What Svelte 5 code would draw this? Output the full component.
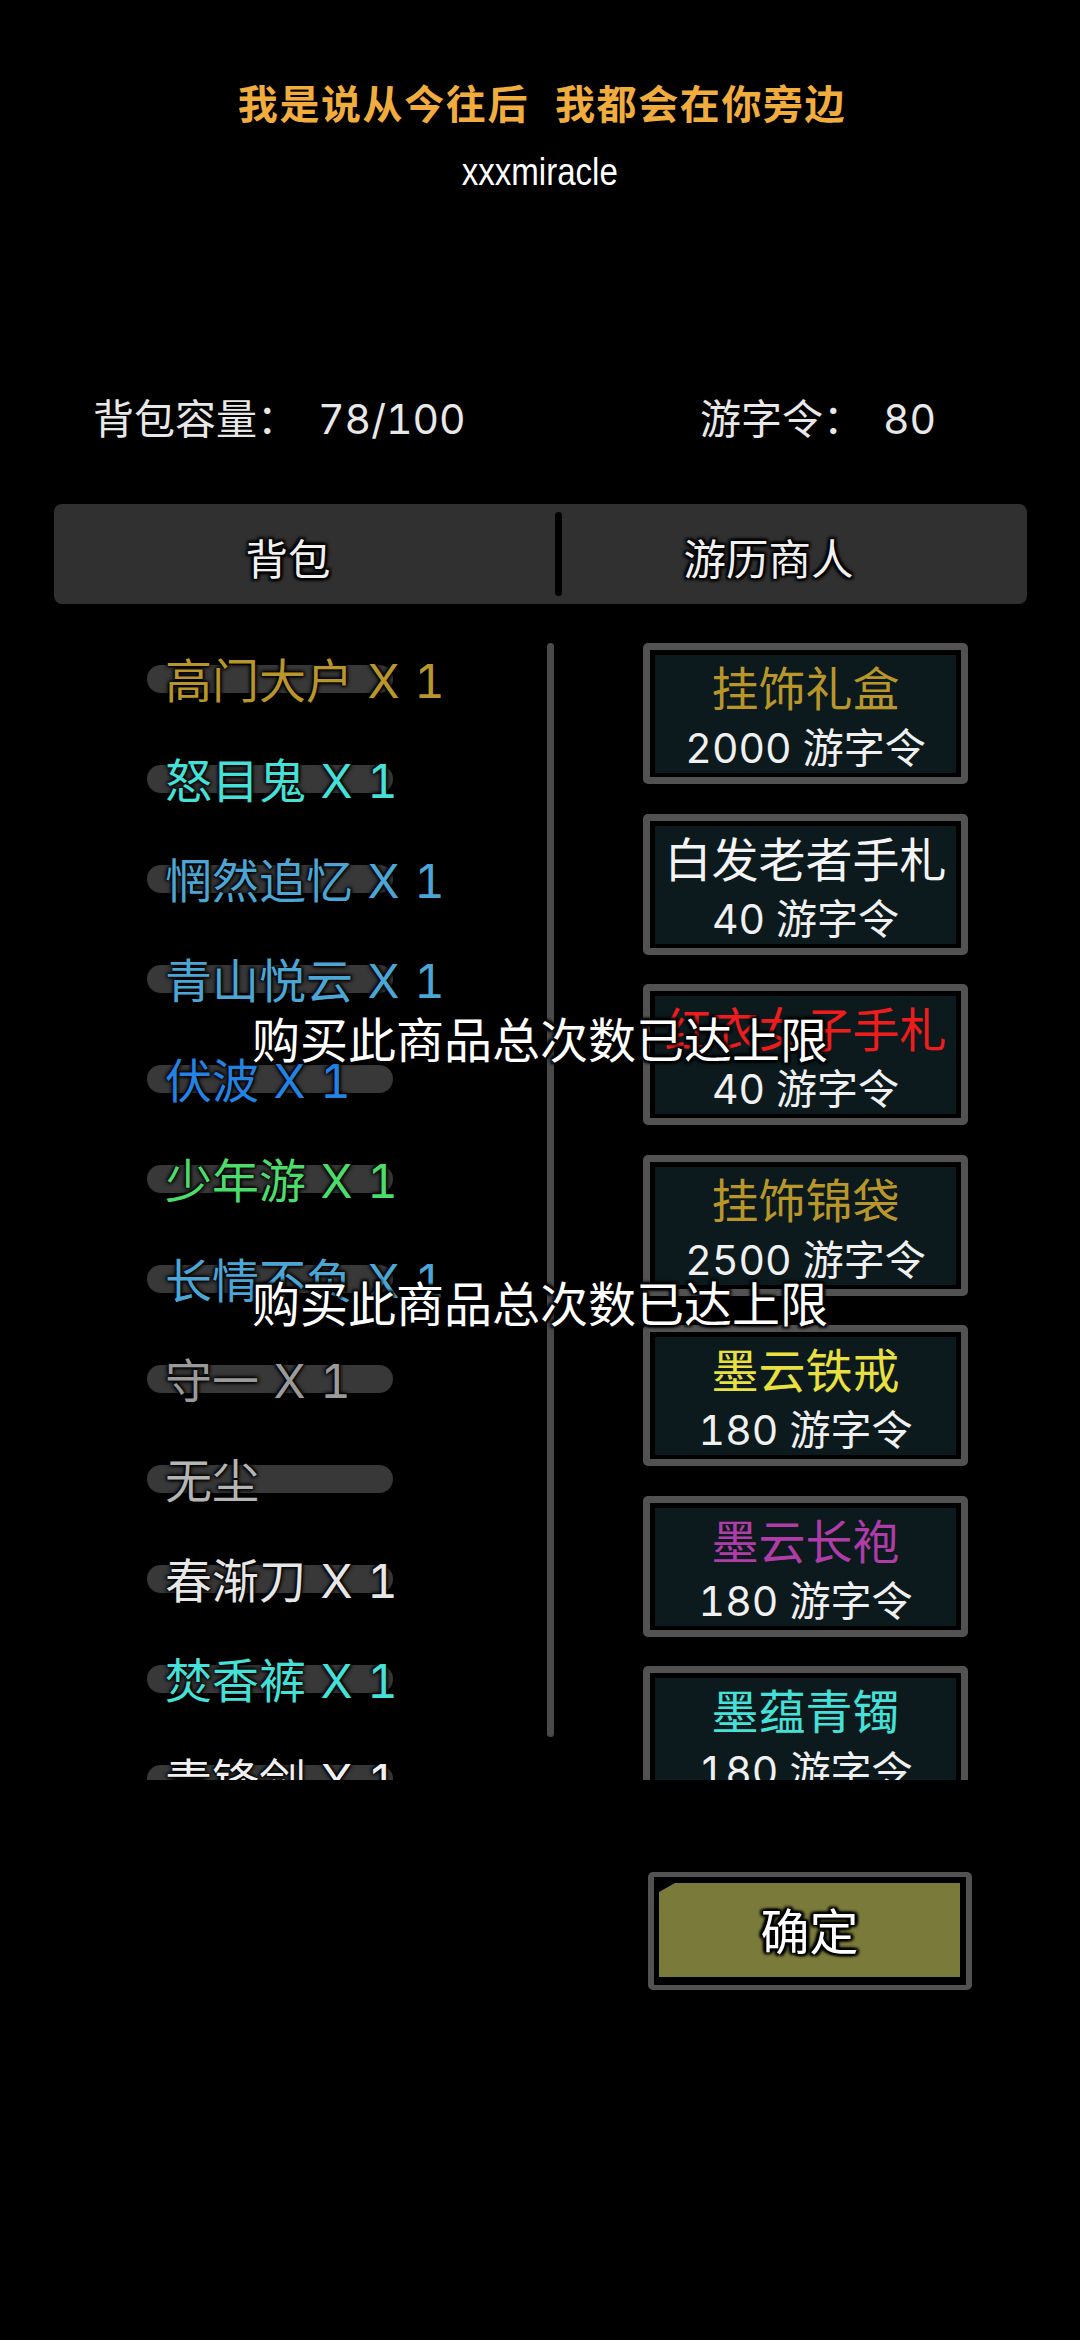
<script>
  const bag = [
    { name: '高门大户 X 1', color: '#b8962a' },
    { name: '怒目鬼 X 1', color: '#45e0d8' },
    { name: '惘然追忆 X 1', color: '#4ba6d6' },
    { name: '青山悦云 X 1', color: '#4ba6d6' },
    { name: '伏波 X 1', color: '#2382e2' },
    { name: '少年游 X 1', color: '#4cdc6c' },
    { name: '长情不负 X 1', color: '#4ba6d6' },
    { name: '守一 X 1', color: '#9a9a9a' },
    { name: '无尘', color: '#b4b4b4' },
    { name: '春渐刀 X 1', color: '#e6e6e6' },
    { name: '焚香裤 X 1', color: '#45e0d8' },
    { name: '青锋剑 X 1', color: '#f0f0f0' }
  ];

  const shop = [
    { name: '挂饰礼盒', price: 2000, color: '#b8962a' },
    { name: '白发老者手札', price: 40, color: '#f4f4f4' },
    { name: '红衣女子手札', price: 40, color: '#ee1c1c' },
    { name: '挂饰锦袋', price: 2500, color: '#b8962a' },
    { name: '墨云铁戒', price: 180, color: '#e8e040' },
    { name: '墨云长袍', price: 180, color: '#b03ca8' },
    { name: '墨蕴青镯', price: 180, color: '#45e0d8' }
  ];
</script>

<div class="page">
  <div class="title">我是说从今往后<span class="gap"></span>我都会在你旁边</div>
  <div class="author"><span>xxxmiracle</span></div>

  <div class="stats">
    <div class="stat bag-stat"><span class="label">背包容量：</span><span>78/100</span></div>
    <div class="stat coin-stat"><span class="label">游字令：</span><span>80</span></div>
  </div>

  <div class="tabs">
    <div class="tab tab-left">背包</div>
    <div class="divider"></div>
    <div class="tab tab-right">游历商人</div>
  </div>

  <div class="panel">
    <div class="bag">
      {#each bag as item}
        <div class="row">
          <div class="pill"></div>
          <span class="item" style="color: {item.color}">{item.name}</span>
        </div>
      {/each}
    </div>
    <div class="scrollbar"></div>
    <div class="shop">
      {#each shop as good}
        <div class="card">
          <div class="card-inner">
            <div class="good" style="color: {good.color}">{good.name}</div>
            <div class="price">{good.price} 游字令</div>
          </div>
        </div>
      {/each}
    </div>
  </div>

  <div class="footer">
    <div class="confirm">
      <div class="confirm-fill">确定</div>
    </div>
  </div>

  <div class="toast toast-one">购买此商品总次数已达上限</div>
  <div class="toast toast-two">购买此商品总次数已达上限</div>
</div>

<style>
  :global(body) {
    margin: 0;
    background: #000;
  }

  .page {
    position: relative;
    width: 1080px;
    height: 2340px;
    overflow: hidden;
    background: #000;
    color: #fff;
    font-family: Inter, "Noto Sans CJK SC", sans-serif;
    font-weight: 400;
    font-variant-numeric: tabular-nums;
  }

  .title {
    padding: 72px 0 0 4px;
    height: 60px;
    line-height: 60px;
    display: flex;
    justify-content: center;
    font-family: "Noto Sans CJK SC", sans-serif;
    font-size: 40px;
    font-weight: 700;
    letter-spacing: 1.6px;
    color: #f0ad3e;
  }

  .gap {
    width: 26px;
  }

  .author {
    margin-top: 15px;
    height: 50px;
    line-height: 50px;
    text-align: center;
    font-family: "Liberation Sans", sans-serif;
    font-size: 38px;
  }

  .author span {
    display: inline-block;
    transform: scaleX(0.87);
  }

  .stats {
    margin-top: 192px;
    height: 60px;
    display: flex;
    padding-left: 93px;
    font-size: 41px;
    line-height: 60px;
    color: #e8e8e8;
  }

  .stat {
    display: flex;
  }

  .label {
    display: block;
  }

  .bag-stat {
    width: 607px;
  }

  .bag-stat .label {
    width: 225px;
  }

  .coin-stat .label {
    width: 183px;
  }

  .tabs {
    margin: 55px 53px 0 54px;
    height: 100px;
    display: flex;
    align-items: center;
    background: #303030;
    border-radius: 8px;
  }

  .tab {
    box-sizing: border-box;
    padding-top: 4px;
    text-align: center;
    font-size: 42.5px;
    color: #f0f0f0;
    text-shadow: 0 0 3px #000, 0 0 3px #000, 2px 2px 3px #000, -2px -2px 3px #000, 2px -2px 3px #000, -2px 2px 3px #000;
  }

  .tab-left {
    width: 501px;
    padding-right: 33px;
  }

  .tab-right {
    flex: 1;
    padding-right: 52px;
  }

  .divider {
    width: 7px;
    height: 84px;
    border-radius: 4px;
    background: #000;
  }

  .panel {
    margin-top: 25px;
    height: 1151px;
    overflow: hidden;
    display: flex;
    align-items: flex-start;
  }

  .bag {
    width: 400px;
    padding-left: 147px;
    flex-shrink: 0;
  }

  .row {
    position: relative;
    height: 100px;
    display: flex;
    align-items: center;
  }

  .pill {
    position: absolute;
    left: 0;
    top: 36px;
    width: 246px;
    height: 28px;
    border-radius: 14px;
    background: #383838;
  }

  .item {
    position: relative;
    margin-left: 18px;
    padding-top: 4px;
    font-size: 47px;
    line-height: 60px;
    word-spacing: 2px;
    white-space: nowrap;
    text-shadow: 0 0 3px #000, 0 0 3px #000, 0 0 4px #000, 0 0 5px #000;
  }

  .scrollbar {
    margin-top: 14px;
    width: 7px;
    height: 1094px;
    flex-shrink: 0;
    border-radius: 4px;
    background: #4a4a4a;
  }

  .shop {
    margin-left: 89px;
    padding-top: 14px;
    width: 325px;
    display: flex;
    flex-direction: column;
    gap: 29.5px;
    flex-shrink: 0;
  }

  .card {
    padding: 5px 5px 4px;
    border: 7px solid #525252;
    border-radius: 5px;
    background: #000;
  }

  .card-inner {
    height: 112px;
    padding-top: 6px;
    background: #0c1a1d;
    text-align: center;
  }

  .good {
    font-size: 47px;
    line-height: 56px;
    white-space: nowrap;
  }

  .price {
    margin-top: 7px;
    font-size: 41px;
    line-height: 48px;
    color: #f0f0f0;
    white-space: nowrap;
  }

  .footer {
    margin-top: 92px;
    padding-left: 648px;
  }

  .confirm {
    width: 324px;
    height: 118px;
    box-sizing: border-box;
    padding: 6px 6px 8px 5px;
    border-style: solid;
    border-color: #525252;
    border-width: 5px 6px;
    border-radius: 5px;
  }

  .confirm-fill {
    height: 100%;
    padding-bottom: 4px;
    box-sizing: border-box;
    display: flex;
    align-items: center;
    justify-content: center;
    background: #7a7a3a;
    clip-path: polygon(16px 0, 100% 0, 100% 100%, 0 100%, 0 9px);
    font-size: 49px;
    color: #fff;
    text-shadow: 0 0 3px #000, 0 0 3px #000, 2px 2px 3px #000, -2px -2px 3px #000, 2px -2px 3px #000, -2px 2px 3px #000, 3px 0 3px #000, -3px 0 3px #000;
  }

  .toast {
    position: absolute;
    left: 0;
    width: 1080px;
    text-align: center;
    font-size: 48px;
    line-height: 60px;
    color: #fff;
    text-shadow: 0 0 3px #000, 0 0 3px #000, 2px 2px 3px #000, -2px -2px 3px #000, 2px -2px 3px #000, -2px 2px 3px #000;
  }

  .toast-one {
    top: 1011px;
  }

  .toast-two {
    top: 1275px;
  }
</style>
